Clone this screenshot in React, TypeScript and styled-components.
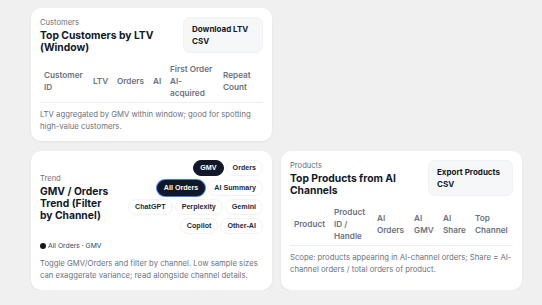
import React from "react";
import styled, { createGlobalStyle } from "styled-components";

const Global = createGlobalStyle`
  html, body { margin: 0; padding: 0; background: #f0f0f0; }
  body {
    font-family: Inter, "Liberation Sans", sans-serif;
    -webkit-font-smoothing: antialiased;
  }
`;

const Page = styled.div`
  display: grid;
  grid-template-columns: 241px 241px;
  column-gap: 9px;
  row-gap: 10px;
  padding: 8px 0 0 31px;
`;

const EmptySlot = styled.div``;

const Card = styled.section`
  background: #ffffff;
  border-radius: 10px;
  box-shadow: 0 1px 3px rgba(16, 24, 40, 0.06);
  padding: 9px 9px 8px;
  display: flex;
  flex-direction: column;
  min-width: 0;
`;

const Header = styled.div`
  display: flex;
  align-items: center;
  gap: 9px;
`;

const TitleGroup = styled.div`
  flex: 1 1 auto;
  min-width: 0;
`;

const Eyebrow = styled.div`
  font-size: 7.6px;
  line-height: 12px;
  color: #6b7280;
`;

const Title = styled.h2`
  margin: 0;
  font-size: 10.3px;
  line-height: 12px;
  font-weight: 700;
  color: #111827;
`;

const ActionButton = styled.button<{ $width: number }>`
  flex: 0 0 ${(p) => p.$width}px;
  font-family: Inter, "Liberation Sans", sans-serif;
  font-size: 8px;
  font-weight: 700;
  line-height: 12px;
  color: #111827;
  text-align: left;
  padding: 5px 8px;
  background: #f6f7f9;
  border: 1px solid #eff1f4;
  border-radius: 7px;
`;

const Table = styled.table`
  width: 100%;
  table-layout: fixed;
  border-collapse: collapse;
  margin-top: 7px;
`;

const Th = styled.th<{ $w: number }>`
  box-sizing: border-box;
  width: ${(p) => p.$w}px;
  text-align: left;
  font-size: 8.2px;
  font-weight: 600;
  line-height: 12px;
  color: #6b7280;
  padding: 3px 4px;
  border-bottom: 1px solid #eceef1;
  vertical-align: middle;
`;

const Note = styled.p`
  margin: 6px 0 0;
  font-size: 7.72px;
  line-height: 12px;
  color: #6b7280;
`;

const Controls = styled.div`
  flex: 0 0 143px;
  display: flex;
  flex-direction: column;
  gap: 4px;
`;

const PillRow = styled.div`
  display: flex;
  flex-wrap: wrap;
  justify-content: flex-end;
  gap: 3px 2px;
`;

const Pill = styled.button<{ $active?: boolean; $focused?: boolean }>`
  font-family: "Liberation Sans", Arial, sans-serif;
  font-size: 7.15px;
  font-weight: 700;
  line-height: 10px;
  padding: 2px 6px;
  border-radius: 999px;
  border: 1px solid ${(p) => (p.$active ? "#111827" : "#f2f3f5")};
  background: ${(p) => (p.$active ? "#111827" : "#ffffff")};
  color: ${(p) => (p.$active ? "#ffffff" : "#1f2937")};
  box-shadow: ${(p) => (p.$focused ? "0 0 0 1px #3b82f6" : "none")};
`;

const Legend = styled.div`
  display: flex;
  align-items: center;
  gap: 2px;
  margin: 7px 0 1px;
  font-size: 6.8px;
  line-height: 10px;
  color: #374151;
`;

const Dot = styled.span`
  width: 6px;
  height: 6px;
  border-radius: 50%;
  background: #111827;
`;

type Col = { label: string; w: number };

const customerCols: Col[] = [
  { label: "Customer ID", w: 49 },
  { label: "LTV", w: 24 },
  { label: "Orders", w: 36 },
  { label: "AI", w: 17 },
  { label: "First Order AI-acquired", w: 53 },
  { label: "Repeat Count", w: 44 },
];

const productCols: Col[] = [
  { label: "Product", w: 40 },
  { label: "Product ID / Handle", w: 43 },
  { label: "AI Orders", w: 37 },
  { label: "AI GMV", w: 29 },
  { label: "AI Share", w: 32 },
  { label: "Top Channel", w: 42 },
];

const channels = [
  "All Orders",
  "AI Summary",
  "ChatGPT",
  "Perplexity",
  "Gemini",
  "Copilot",
  "Other-AI",
];

function HeaderTable({ cols }: { cols: Col[] }) {
  return (
    <Table>
      <thead>
        <tr>
          {cols.map((c) => (
            <Th key={c.label} $w={c.w}>
              {c.label}
            </Th>
          ))}
        </tr>
      </thead>
    </Table>
  );
}

export default function App() {
  return (
    <>
      <Global />
      <Page>
        <Card>
          <Header>
            <TitleGroup>
              <Eyebrow>Customers</Eyebrow>
              <Title>Top Customers by LTV (Window)</Title>
            </TitleGroup>
            <ActionButton $width={80}>Download LTV CSV</ActionButton>
          </Header>
          <HeaderTable cols={customerCols} />
          <Note>
            LTV aggregated by GMV within window; good for spotting high-value
            customers.
          </Note>
        </Card>
        <EmptySlot />
        <Card>
          <Header>
            <TitleGroup>
              <Eyebrow>Trend</Eyebrow>
              <Title>GMV / Orders Trend (Filter by Channel)</Title>
            </TitleGroup>
            <Controls>
              <PillRow>
                <Pill $active>GMV</Pill>
                <Pill>Orders</Pill>
              </PillRow>
              <PillRow>
                {channels.map((c, i) => (
                  <Pill key={c} $active={i === 0} $focused={i === 0}>
                    {c}
                  </Pill>
                ))}
              </PillRow>
            </Controls>
          </Header>
          <Legend>
            <Dot />
            <span>All Orders · GMV</span>
          </Legend>
          <Note>
            Toggle GMV/Orders and filter by channel. Low sample sizes can
            exaggerate variance; read alongside channel details.
          </Note>
        </Card>
        <Card>
          <Header>
            <TitleGroup>
              <Eyebrow>Products</Eyebrow>
              <Title>Top Products from AI Channels</Title>
            </TitleGroup>
            <ActionButton $width={85}>Export Products CSV</ActionButton>
          </Header>
          <HeaderTable cols={productCols} />
          <Note>
            Scope: products appearing in AI-channel orders; Share = AI-channel
            orders / total orders of product.
          </Note>
        </Card>
      </Page>
    </>
  );
}
